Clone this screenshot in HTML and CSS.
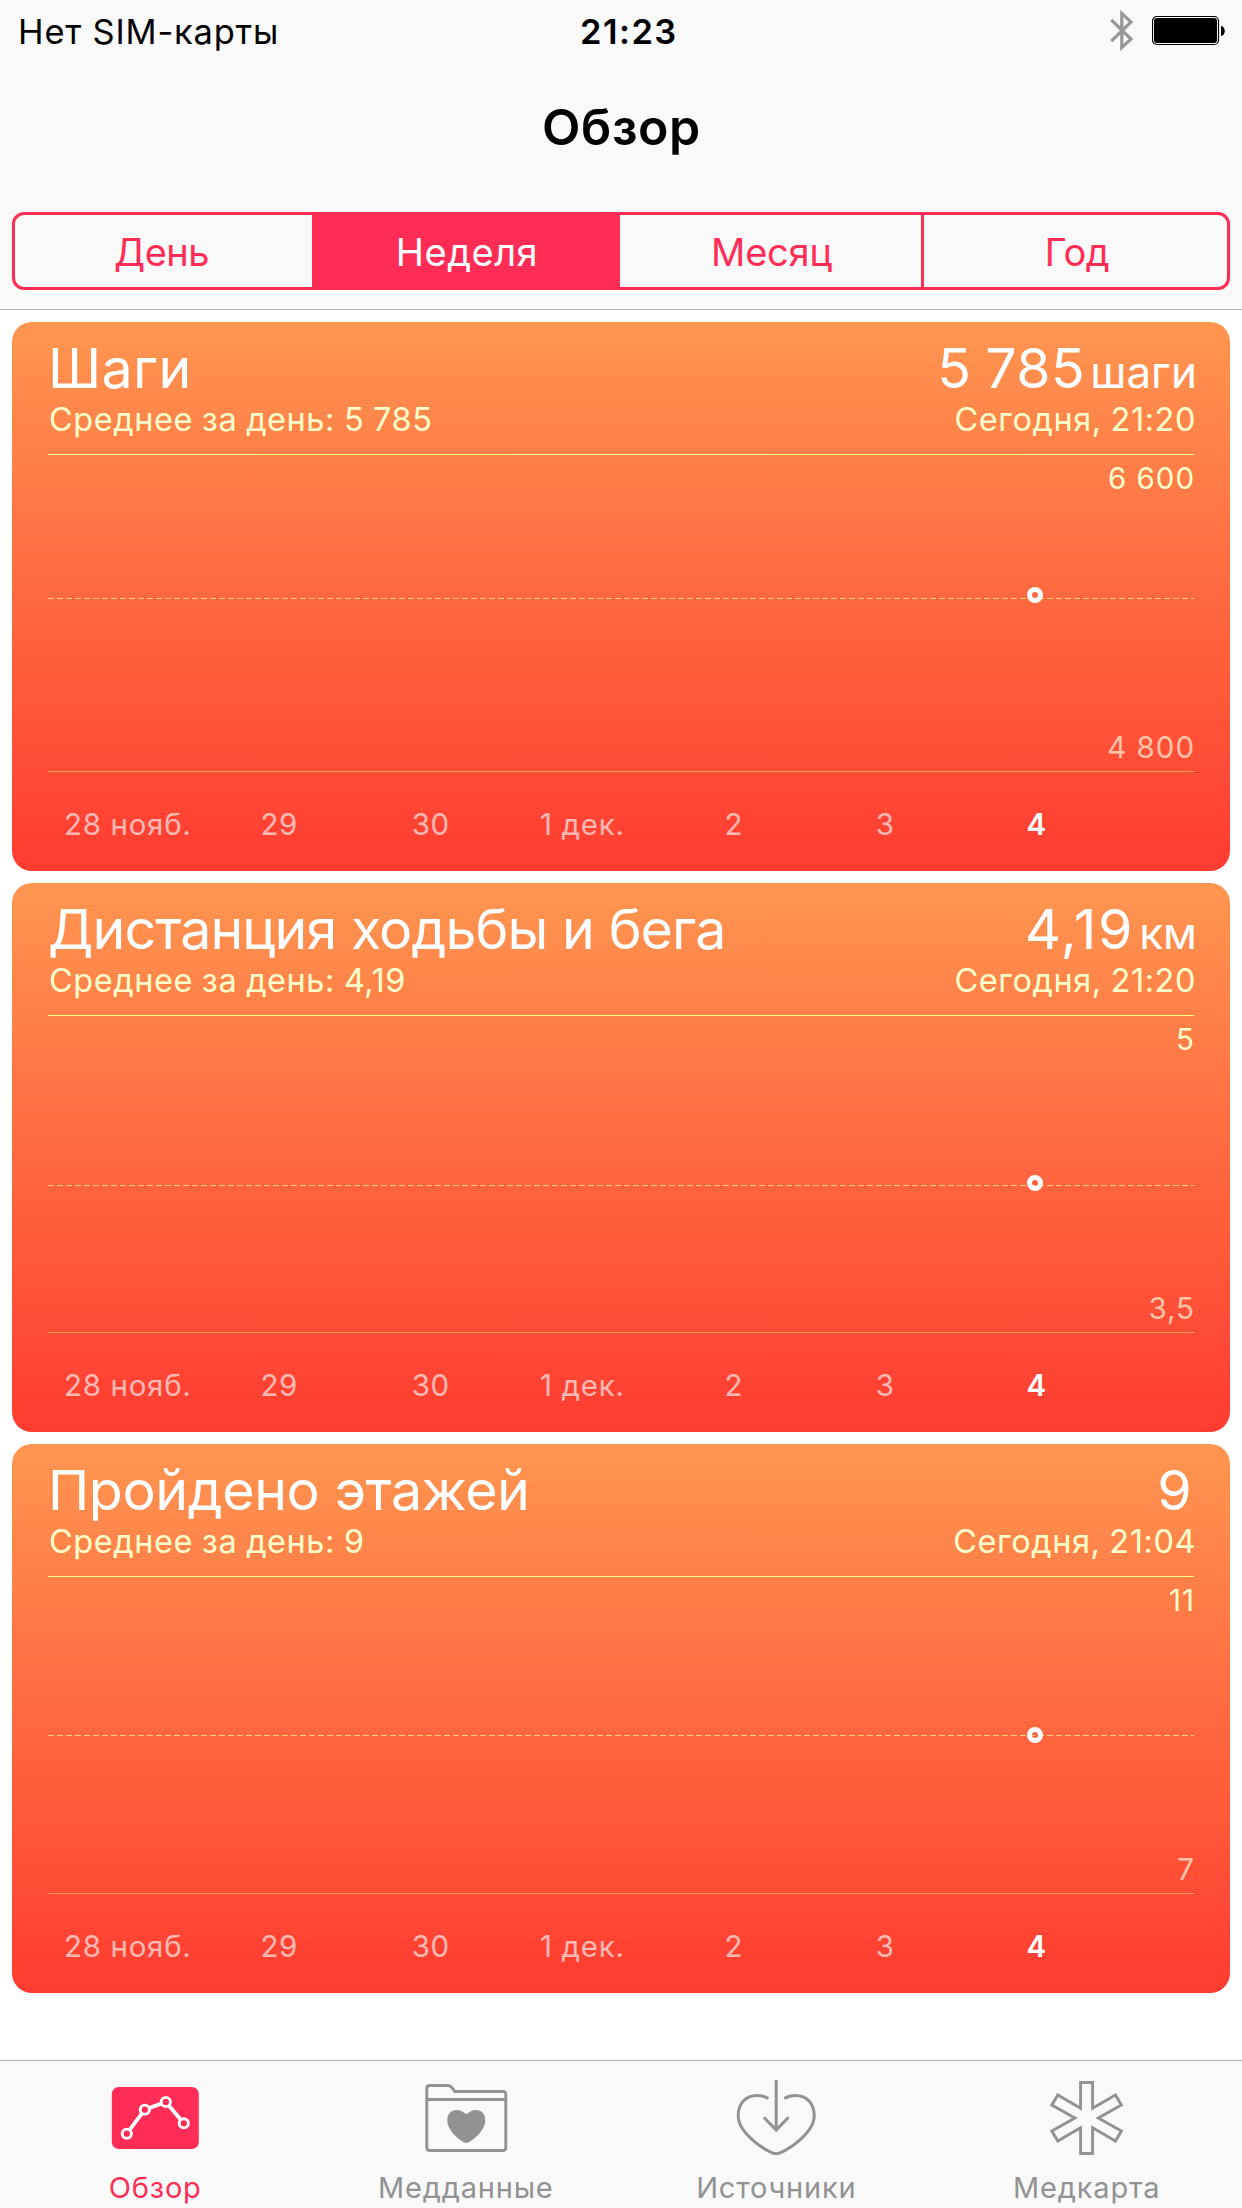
FILE: index.html
```html
<!DOCTYPE html>
<html lang="ru">
<head>
    <meta charset="UTF-8">
    <meta name="viewport" content="width=device-width, initial-scale=1.0">
    <title>Обзор</title>
    <link rel="stylesheet" href="styles.css">
</head>
<body>
    <div class="screen">
        <header class="header">
            <div class="status-bar">
                <span class="carrier">Нет SIM-карты</span>
                <span class="time">21:23</span>
                <div class="status-icons">
                    <svg class="bluetooth" viewBox="0 0 24 42">
                        <path d="M1.3 9.8 L21 29 L11.8 37.6 V3.4 L21 12 L1.3 31.2" fill="none" stroke="#979797" stroke-width="3.2"/>
                    </svg>
                    <svg class="battery" viewBox="0 0 74 30">
                        <rect x="0.5" y="0.5" width="66" height="28" rx="4.5" fill="#fff" stroke="#000" stroke-width="1.2"/>
                        <rect x="2" y="2" width="63" height="25" rx="3"/>
                        <path d="M69 10 C74 10.5 74 19.5 69 20 z"/>
                    </svg>
                </div>
            </div>
            <h1>Обзор</h1>
            <div class="segments">
                <div class="segment day">День</div>
                <div class="segment week active">Неделя</div>
                <div class="segment month">Месяц</div>
                <div class="segment year">Год</div>
            </div>
        </header>

        <main class="cards">
            <!-- Steps -->
            <section class="card">
                <div class="card-head">
                    <div>
                        <h2>Шаги</h2>
                        <p>Среднее за день: 5 785</p>
                    </div>
                    <div class="right">
                        <div class="value">5 785<span class="unit">шаги</span></div>
                        <p>Сегодня, 21:20</p>
                    </div>
                </div>
                <div class="chart">
                    <svg class="plot" viewBox="0 0 1146 316">
                        <line class="average" x1="0" y1="143.5" x2="1146" y2="143.5"/>
                        <circle class="point" cx="987" cy="140" r="5.5"/>
                    </svg>
                    <span class="max">6 600</span>
                    <span class="min">4 800</span>
                </div>
                <div class="dates">
                    <span>28 нояб.</span><span>29</span><span>30</span><span>1 дек.</span><span>2</span><span>3</span><span class="today">4</span>
                </div>
            </section>

            <!-- Distance -->
            <section class="card">
                <div class="card-head">
                    <div>
                        <h2 class="distance-title">Дистанция ходьбы и бега</h2>
                        <p>Среднее за день: 4,19</p>
                    </div>
                    <div class="right">
                        <div class="value decimal">4,19<span class="unit">км</span></div>
                        <p>Сегодня, 21:20</p>
                    </div>
                </div>
                <div class="chart">
                    <svg class="plot" viewBox="0 0 1146 316">
                        <line class="average" x1="0" y1="169.5" x2="1146" y2="169.5"/>
                        <circle class="point" cx="987" cy="167" r="5.5"/>
                    </svg>
                    <span class="max">5</span>
                    <span class="min">3,5</span>
                </div>
                <div class="dates">
                    <span>28 нояб.</span><span>29</span><span>30</span><span>1 дек.</span><span>2</span><span>3</span><span class="today">4</span>
                </div>
            </section>

            <!-- Floors -->
            <section class="card">
                <div class="card-head">
                    <div>
                        <h2 class="floors-title">Пройдено этажей</h2>
                        <p>Среднее за день: 9</p>
                    </div>
                    <div class="right">
                        <div class="value no-unit">9</div>
                        <p>Сегодня, 21:04</p>
                    </div>
                </div>
                <div class="chart">
                    <svg class="plot" viewBox="0 0 1146 316">
                        <line class="average" x1="0" y1="158.5" x2="1146" y2="158.5"/>
                        <circle class="point" cx="987" cy="158" r="5.5"/>
                    </svg>
                    <span class="max">11</span>
                    <span class="min">7</span>
                </div>
                <div class="dates">
                    <span>28 нояб.</span><span>29</span><span>30</span><span>1 дек.</span><span>2</span><span>3</span><span class="today">4</span>
                </div>
            </section>
        </main>

        <nav class="tab-bar">
            <div class="tab active">
                <svg viewBox="0 0 100 101">
                    <rect x="6.8" y="26" width="87" height="62" rx="7" fill="#ff2d55"/>
                    <polyline points="21.8,72.7 39.8,48.7 60.8,41 78.8,62.3" fill="none" stroke="#fff" stroke-width="3.8"/>
                    <g fill="#ff2d55" stroke="#fff" stroke-width="2.9">
                        <circle cx="21.8" cy="72.7" r="4.6"/>
                        <circle cx="39.8" cy="48.7" r="4.6"/>
                        <circle cx="60.8" cy="41" r="4.6"/>
                        <circle cx="78.8" cy="62.3" r="4.6"/>
                    </g>
                </svg>
                <span>Обзор</span>
            </div>
            <div class="tab">
                <svg viewBox="0 0 100 101">
                    <path d="M10.8 27.5 Q10.8 24.5 13.8 24.5 H32 Q34.5 24.5 36 26.7 L38.8 30.5 H87 Q89.8 30.5 89.8 33.3 V86.5 Q89.8 89.5 86.8 89.5 H13.8 Q10.8 89.5 10.8 86.5 Z M10.8 38.5 H89.8" fill="none" stroke="#929292" stroke-width="2.9"/>
                    <path d="M50.3 82 C47 82 31.3 71 31.3 59.5 C31.3 53 35 49 41 49 C46 49 48.3 52.8 50.3 52.8 C52.3 52.8 54.6 49 59.6 49 C65.6 49 69.3 53 69.3 59.5 C69.3 71 53.6 82 50.3 82 Z" fill="#929292"/>
                </svg>
                <span>Медданные</span>
            </div>
            <div class="tab">
                <svg viewBox="0 0 100 101">
                    <g fill="none" stroke="#929292" stroke-width="3">
                        <path d="M42.4 37.5 C39 35.6 35 34.5 31 34.5 C19 34.5 12.2 43 12.2 54.7 C12.2 73 43 92.7 50.2 92.7 C57.4 92.7 88.2 73 88.2 54.7 C88.2 43 81.4 34.5 69.4 34.5 C65.4 34.5 61.4 35.6 58.2 37.5"/>
                        <path d="M50.2 19 V68.5 M37.8 56.3 L50.2 69 L62.6 56.3"/>
                    </g>
                </svg>
                <span>Источники</span>
            </div>
            <div class="tab">
                <svg viewBox="0 0 100 101">
                    <path d="M43.6 21.5 H55.6 V47.3 L78.4 34 L84.4 44 L61.3 57 L84.4 70 L78.4 80 L55.6 66.7 V92.5 H43.6 V66.7 L20.8 80 L14.8 70 L37.9 57 L14.8 44 L20.8 34 L43.6 47.3 Z" fill="none" stroke="#929292" stroke-width="2.9"/>
                </svg>
                <span>Медкарта</span>
            </div>
        </nav>
    </div>
</body>
</html>
```
FILE: styles.css
```css
* {
    box-sizing: border-box;
}

body {
    margin: 0;
    font-family: "Inter", "Liberation Sans", sans-serif;
    background-color: #fff;
}

h1, h2, p {
    margin: 0;
    font-weight: 400;
}

.screen {
    width: 1242px;
    height: 2208px;
    display: flex;
    flex-direction: column;
    overflow: hidden;
}

/* Header */
.header {
    height: 310px;
    background-color: #f9f9f9;
    border-bottom: 1px solid #b2b2b2;
}

.status-bar {
    display: grid;
    grid-template-columns: 580px 1fr auto;
    height: 63px;
    padding-right: 16px;
    font-size: 34.4px;
    line-height: 63px;
}

.carrier {
    padding-left: 18px;
    letter-spacing: 0.82px;
}

.time {
    font-weight: 600;
    letter-spacing: 1.5px;
}

.status-icons {
    display: flex;
    gap: 18px;
}

.bluetooth {
    width: 24px;
    height: 42px;
    margin-top: 10px;
}

.battery {
    width: 74px;
    height: 30px;
    margin-top: 16px;
}

h1 {
    padding-left: 1px;
    font-size: 50px;
    line-height: 128px;
    font-weight: 600;
    letter-spacing: 0.6px;
    text-align: center;
}

.segments {
    display: grid;
    grid-template-columns: 297px 308px 304px 1fr;
    height: 78px;
    margin: 21px 12px 0;
    border: 3px solid #ff2d55;
    border-radius: 12px;
}

.segment {
    height: 72px;
    font-size: 38px;
    line-height: 75px;
    color: #ff2d55;
    text-align: center;
}

.segment.active {
    color: #fff;
    background-color: #ff2d55;
}

.day {
    padding-right: 4px;
    letter-spacing: -0.5px;
}

.week {
    padding-left: 2px;
    letter-spacing: 0.5px;
}

.month {
    padding-left: 2px;
    border-right: 3px solid #ff2d55;
    letter-spacing: -0.2px;
}

.year {
    padding-left: 3px;
    letter-spacing: -0.4px;
}

/* Cards */
.cards {
    flex: 1;
    display: flex;
    flex-direction: column;
    gap: 12px;
    padding: 12px 12px 0;
}

.card {
    height: 549px;
    padding: 0 36px;
    border-radius: 20px;
    background: linear-gradient(#ff9650, #ff3b30);
}

.card-head {
    display: flex;
    justify-content: space-between;
    height: 132px;
    padding-top: 8px;
    white-space: nowrap;
}

h2, .value {
    height: 76px;
    font-size: 55.5px;
    line-height: 76px;
    color: #fff;
    letter-spacing: 0.4px;
}

.value {
    word-spacing: -2px;
}

.decimal {
    letter-spacing: 1.8px;
}

.distance-title {
    letter-spacing: -0.92px;
}

.floors-title {
    letter-spacing: -0.4px;
}

.card-head p {
    padding-left: 1px;
    font-size: 32.5px;
    line-height: 28px;
    letter-spacing: 0.55px;
    word-spacing: -0.8px;
    color: #ffc;
}

.right {
    margin-right: -3px;
    text-align: right;
}

.right p {
    padding-right: 1px;
}

.unit {
    margin-left: 5px;
    font-size: 44px;
    line-height: 1;
    letter-spacing: 0;
}

.no-unit {
    padding-right: 5px;
}

.chart {
    position: relative;
    display: flex;
    flex-direction: column;
    justify-content: space-between;
    height: 318px;
    border-top: 1px solid #ffff8a;
    border-bottom: 1px solid rgba(255, 255, 140, 0.45);
    font-size: 29.5px;
    line-height: 47px;
    letter-spacing: 1px;
    text-align: right;
}

/* The plot lies under the scale labels */
.plot {
    position: absolute;
    top: 0;
    left: 0;
    width: 1146px;
    height: 316px;
}

.average {
    stroke: #ffff96;
    stroke-opacity: 0.7;
    stroke-dasharray: 6 3;
}

.point {
    fill: none;
    stroke: #fff;
    stroke-width: 5px;
}

.max {
    color: #ffc;
}

.min {
    color: rgba(255, 255, 225, 0.68);
}

.max, .min {
    margin-right: -1px;
}

.dates {
    display: grid;
    grid-template-columns: repeat(7, 151.5px);
    height: 99px;
    padding: 5px 0 0 4px;
    font-size: 29.5px;
    line-height: 95px;
    letter-spacing: 0.7px;
    text-align: center;
    color: rgba(255, 255, 255, 0.65);
}

.today {
    font-weight: 600;
    color: #fff;
}

/* Tab bar */
.tab-bar {
    display: grid;
    grid-template-columns: repeat(4, 1fr);
    height: 148px;
    border-top: 1px solid #b2b2b2;
    background-color: #f9f9f9;
}

.tab {
    display: flex;
    flex-direction: column;
    align-items: center;
    font-size: 29px;
    line-height: 52px;
    letter-spacing: 0.8px;
    color: #929292;
}

.tab svg {
    width: 100px;
    height: 101px;
    flex-shrink: 0;
}

.tab span {
    height: 46px;
}

.tab.active {
    color: #ff2d55;
}
```
